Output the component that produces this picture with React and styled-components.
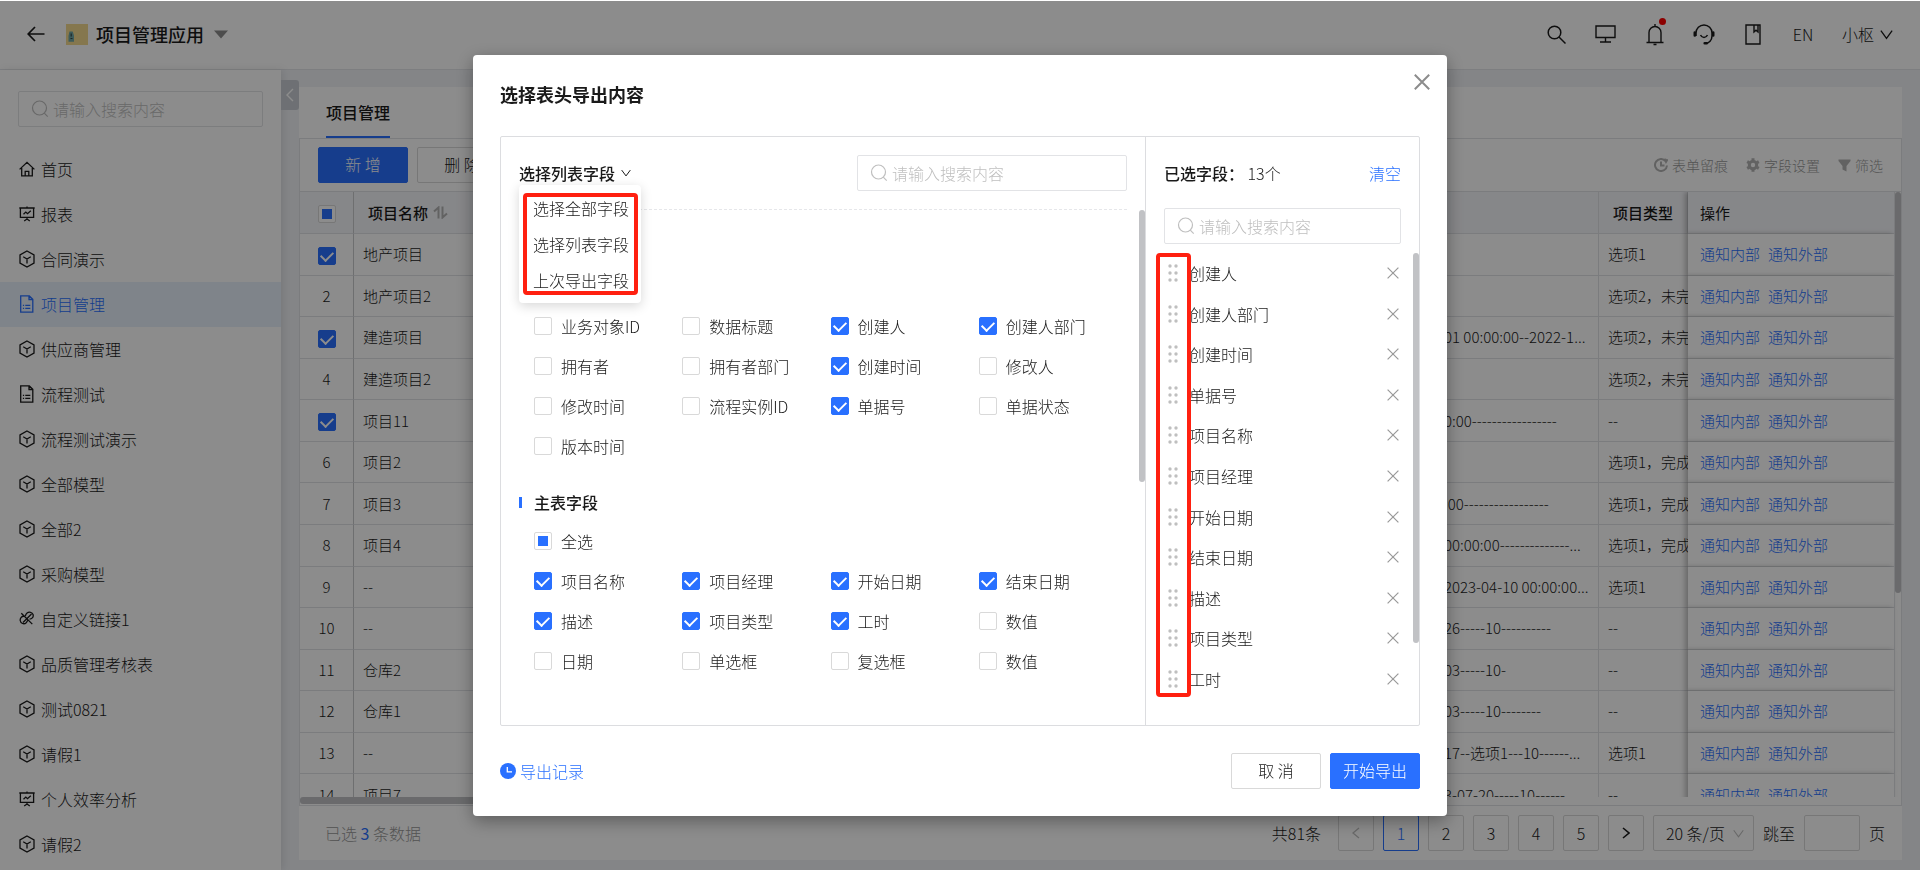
import React, { useEffect, useRef, useState } from 'react'
import styled, { createGlobalStyle } from 'styled-components';

const GlobalStyle = createGlobalStyle`
    * {
        box-sizing: border-box;
    }
    body {
        margin: 0;
        background-color: white;
        color: #1a1a1a;
        font-family: "Noto Sans CJK SC", "Noto Sans", sans-serif;
        font-size: 16px;
        font-weight: 300;
        line-height: 24px;
    }
    button, input, select {
        font: inherit;
        color: inherit;
    }
    button {
        border: none;
        background: none;
        padding: 0;
        cursor: pointer;
    }
    a {
        color: #2970ff;
        text-decoration: none;
    }
    svg {
        display: block;
        flex: none;
    }
`;

const Page = styled.div`
    height: 100vh;
    padding-top: 1px;
    display: flex;
    flex-direction: column;
    overflow: hidden;
`;

/* ---------- top bar ---------- */
const TopBar = styled.header`
    height: 69px;
    flex: none;
    display: flex;
    align-items: center;
    justify-content: space-between;
    padding: 0 27px 2px;
    border-bottom: 1px solid #e4e6ea;
`;
const Brand = styled.div`
    display: flex;
    align-items: center;
`;
const BackButton = styled.button`
    margin-right: 21px;
`;
const AppTitle = styled.h1`
    margin: 0 10px 0 8px;
    font-size: 18px;
    font-weight: 500;
`;
const Tools = styled.div`
    display: flex;
    align-items: center;
    gap: 27px;
`;
const ToolButton = styled.button`
    position: relative;
    width: ${({ $wide }) => ($wide ? "24px" : "22px")};
    display: flex;
    justify-content: center;
`;
const Dot = styled.span`
    position: absolute;
    top: -5px;
    right: 0;
    width: 7px;
    height: 7px;
    border-radius: 50%;
    background-color: #ff0000;
`;
const UserButton = styled.button`
    display: flex;
    align-items: center;
    gap: 6px;
`;

/* ---------- side menu ---------- */
const Body = styled.div`
    flex: 1;
    min-height: 0;
    display: flex;
    background-color: #f0f2f6;
`;
const SideBar = styled.nav`
    width: 281px;
    flex: none;
    padding-top: 21px;
    background-color: white;
    box-shadow: 2px 0 8px rgba(0, 0, 0, 0.1);
    overflow: hidden;
`;
const SideSearch = styled.div`
    padding: 0 18px 20px;
`;
const MenuItem = styled.a`
    height: 45px;
    padding: 0 0 2px 19px;
    display: flex;
    align-items: center;
    gap: 6px;
    color: ${({ $active }) => ($active ? "#2970ff" : "#1a1a1a")};
    background-color: ${({ $active }) => ($active ? "#e8f1fc" : "transparent")};
`;
const CollapseButton = styled.button`
    width: 18px;
    height: 30px;
    flex: none;
    margin-top: 10px;
    display: flex;
    align-items: center;
    justify-content: center;
    border-radius: 0 3px 3px 0;
    background-color: #c9cdd4;
`;

/* ---------- search box ---------- */
const SearchWrapper = styled.label`
    width: ${({ $width }) => $width || "100%"};
    height: 36px;
    padding: 0 12px 1px;
    display: flex;
    align-items: center;
    gap: 4px;
    border: 1px solid #e2e3e6;
    border-radius: 2px;
    background-color: white;
`;
const SearchInput = styled.input`
    flex: 1;
    min-width: 0;
    padding: 0;
    border: none;
    outline: none;
    background: none;
    &::placeholder {
        color: #bfbfbf;
        opacity: 1;
    }
`;

/* ---------- list page ---------- */
const Main = styled.main`
    flex: 1;
    min-width: 0;
    margin: 17px 18px 10px 0;
    display: flex;
    flex-direction: column;
    background-color: white;
`;
const Tabs = styled.div`
    height: 52px;
    flex: none;
    padding-left: 27px;
    display: flex;
    border-bottom: 1px solid #e0e2e6;
`;
const Tab = styled.button`
    font-weight: 500;
    border-bottom: 2px solid #2970ff;
`;
const Panel = styled.section`
    flex: 1;
    min-height: 0;
    display: flex;
    flex-direction: column;
    border: 1px solid #e0e2e6;
    border-top: none;
`;
const ToolRow = styled.div`
    height: 53px;
    flex: none;
    padding: 0 18px;
    display: flex;
    align-items: center;
    justify-content: space-between;
    border-bottom: 1px solid #e0e2e6;
`;
const ButtonGroup = styled.div`
    display: flex;
    gap: 9px;
`;
const Button = styled.button`
    width: 90px;
    height: 36px;
    padding-bottom: 2px;
    border-radius: 2px;
    border: 1px solid ${({ $primary }) => ($primary ? "#2970ff" : "#d9d9d9")};
    background-color: ${({ $primary }) => ($primary ? "#2970ff" : "white")};
    color: ${({ $primary }) => ($primary ? "white" : "#1a1a1a")};
`;
const Actions = styled.div`
    display: flex;
    gap: 18px;
`;
const Action = styled.button`
    display: flex;
    align-items: center;
    gap: 4px;
    font-size: 14px;
    color: #999;
    svg {
        color: #b3b3b3;
    }
`;
const TableArea = styled.div`
    flex: 1;
    min-height: 0;
    display: flex;
    overflow: hidden;
`;
const Table = styled.table`
    flex: 1;
    width: 100%;
    height: 624px;
    table-layout: fixed;
    border-collapse: separate;
    border-spacing: 0;
    font-size: 15px;
    line-height: 22px;
`;
const Th = styled.th`
    height: 42px;
    padding: 0 14px;
    text-align: left;
    font-weight: ${({ $light }) => ($light ? 400 : 500)};
    white-space: nowrap;
    background-color: #f5f6fa;
    border-bottom: 1px solid #e0e2e6;
    border-right: 1px solid #e0e2e6;
`;
const Td = styled.td`
    padding: 0 9px;
    white-space: nowrap;
    overflow: hidden;
    border-bottom: 1px solid #e0e2e6;
    border-right: ${({ $plain }) => ($plain ? "none" : "1px solid #e0e2e6")};
`;
const IndexTh = styled(Th)`
    padding: 0;
    text-align: center;
    border-right-color: #c8cacd;
`;
const IndexTd = styled(Td)`
    padding: 0;
    text-align: center;
    border-right-color: #c8cacd;
`;
const FixedTh = styled(Th)`
    padding: 0 12px;
    box-shadow: -3px 0 5px rgba(0, 0, 0, 0.25);
`;
const FixedTd = styled(Td)`
    padding: 0 12px;
    background-color: white;
    box-shadow: -3px 0 5px rgba(0, 0, 0, 0.25);
`;
const RowLink = styled.a`
    margin-right: 8px;
`;
const HeadLabel = styled.span`
    display: flex;
    align-items: center;
    gap: 5px;
`;
const ScrollTrack = styled.div`
    width: 6px;
    flex: none;
`;
const ScrollThumb = styled.div`
    height: ${({ $length }) => $length};
    border-radius: 3px;
    background-color: #c1c2c5;
`;
const BottomTrack = styled.div`
    height: 8px;
    flex: none;
`;
const BottomThumb = styled.div`
    width: 45%;
    height: 7px;
    border-radius: 3px;
    background-color: #c1c2c5;
`;
const TableFooter = styled.footer`
    height: 54px;
    flex: none;
    padding: 0 17px 0 26px;
    display: flex;
    align-items: center;
    justify-content: space-between;
`;
const Selected = styled.span`
    color: #999;
    strong {
        font-weight: 400;
        color: #2970ff;
    }
`;
const Pager = styled.div`
    display: flex;
    align-items: center;
    gap: 9px;
`;
const PageTotal = styled.span`
    margin-right: 8px;
`;
const PageButton = styled.button`
    width: 36px;
    height: 36px;
    display: flex;
    align-items: center;
    justify-content: center;
    border: 1px solid ${({ $active }) => ($active ? "#2970ff" : "#d9d9d9")};
    border-radius: 2px;
    color: ${({ $active }) => ($active ? "#2970ff" : "#1a1a1a")};
`;
const SizeBox = styled.label`
    height: 36px;
    padding: 0 9px 0 12px;
    display: flex;
    align-items: center;
    border: 1px solid #d9d9d9;
    border-radius: 2px;
`;
const SizeSelect = styled.select`
    width: 67px;
    padding: 0;
    appearance: none;
    border: none;
    outline: none;
    background: none;
`;
const JumpLabel = styled.label`
    display: flex;
    align-items: center;
    gap: 9px;
`;
const JumpInput = styled.input`
    width: 56px;
    height: 36px;
    border: 1px solid #d9d9d9;
    border-radius: 2px;
    background: none;
`;

/* ---------- check box ---------- */
const CheckInput = styled.input`
    appearance: none;
    width: 18px;
    height: 18px;
    flex: none;
    margin: 0;
    display: inline-flex;
    align-items: center;
    justify-content: center;
    vertical-align: middle;
    border: 1px solid #d9d9d9;
    border-radius: 2px;
    background-color: white;

    &:checked {
        border-color: #2970ff;
        background-color: #2970ff;
    }
    &:checked::after {
        content: "";
        width: 6px;
        height: 10px;
        margin-bottom: 3px;
        border: solid white;
        border-width: 0 2px 2px 0;
        transform: rotate(45deg);
    }
    &:indeterminate::after {
        content: "";
        width: 10px;
        height: 10px;
        background-color: #2970ff;
    }
`;

/* ---------- dialog ---------- */
const Mask = styled.div`
    position: fixed;
    inset: 1px 0 0;
    display: flex;
    align-items: center;
    justify-content: center;
    background-color: rgba(0, 0, 0, 0.45);
`;
const Dialog = styled.div`
    width: 974px;
    max-width: 96vw;
    border-radius: 4px;
    background-color: white;
    box-shadow: 0 5px 18px rgba(0, 0, 0, 0.35);
`;
const DialogHeader = styled.div`
    height: 81px;
    padding: 19px 17px 0 27px;
    display: flex;
    align-items: flex-start;
    justify-content: space-between;
`;
const DialogTitle = styled.h2`
    margin: 8px 0 0;
    font-size: 18px;
    font-weight: 700;
`;
const Panes = styled.div`
    height: 590px;
    margin: 0 27px;
    display: grid;
    grid-template-columns: 1fr 273px;
    border: 1px solid #dcdde0;
    border-radius: 2px;
`;
const FieldPane = styled.div`
    min-height: 0;
    display: flex;
    flex-direction: column;
    border-right: 1px solid #dcdde0;
`;
const FieldHeader = styled.div`
    margin: 0 18px;
    padding: 18px 0;
    display: flex;
    align-items: center;
    justify-content: space-between;
    border-bottom: 1px dashed #e6e7ea;
`;
const DropdownWrapper = styled.div`
    position: relative;
`;
const DropdownButton = styled.button`
    display: flex;
    align-items: center;
    gap: 6px;
    font-weight: 500;
`;
const DropdownMenu = styled.div`
    position: absolute;
    top: 100%;
    left: 0;
    z-index: 2;
    width: 122px;
    padding: 5px 0;
    border-radius: 4px;
    background-color: white;
    box-shadow: 0 3px 12px rgba(0, 0, 0, 0.16);
`;
const DropdownItem = styled.button`
    width: 100%;
    height: 36px;
    padding-left: 14px;
    display: flex;
    align-items: center;
`;
const Highlight = styled.span`
    position: absolute;
    inset: ${({ $inset }) => $inset};
    border: 4px solid #ff2010;
    border-radius: 4px;
    pointer-events: none;
`;
const FieldScroll = styled.div`
    flex: 1;
    min-height: 0;
    display: flex;
`;
const FieldBody = styled.div`
    flex: 1;
    padding: 72px 12px 0 18px;
`;
const FieldSection = styled.section`
    padding-top: 24px;
`;
const SectionTitle = styled.h3`
    margin: 0 0 7px;
    display: flex;
    align-items: center;
    gap: 12px;
    font-size: 16px;
    font-weight: 500;

    &::before {
        content: "";
        width: 3px;
        height: 11px;
        background-color: #2970ff;
    }
`;
const FieldGrid = styled.div`
    padding-left: 15px;
    display: grid;
    grid-template-columns: repeat(4, 1fr);
`;
const CheckLabel = styled.label`
    height: 40px;
    padding-left: ${({ $all }) => ($all ? "15px" : "0")};
    display: flex;
    align-items: center;
    gap: 9px;
`;
const SelectedPane = styled.div`
    min-width: 0;
    min-height: 0;
    padding-top: 18px;
`;
const SelectedHeader = styled.div`
    height: 36px;
    margin: 0 18px 17px;
    display: flex;
    align-items: center;
    justify-content: space-between;
`;
const SelectedCount = styled.span`
    strong {
        font-weight: 500;
    }
`;
const TextButton = styled.button`
    display: flex;
    align-items: center;
    gap: 4px;
    color: #2970ff;
`;
const SelectedSearch = styled.div`
    padding: 0 18px 9px;
`;
const SelectedScroll = styled.div`
    position: relative;
    height: 453px;
    display: flex;
`;
const SelectedList = styled.ul`
    flex: 1;
    height: 446px;
    margin: 0;
    padding: 0 14px 0 22px;
    display: grid;
    grid-auto-rows: 1fr;
    list-style: none;
`;
const SelectedItem = styled.li`
    display: flex;
    align-items: center;
    gap: 10px;
    span {
        flex: 1;
    }
`;
const DialogFooter = styled.div`
    padding: 27px;
    display: flex;
    align-items: center;
    justify-content: space-between;
`;

/* ---------- icons ---------- */
const Icon = ({ w = 16, h = w, box, sw = 1.3, children }) => (
    <svg width={w} height={h} viewBox={box || `0 0 ${w} ${h}`} fill="none" stroke="currentColor" strokeWidth={sw} aria-hidden="true">{children}</svg>
)

const SearchIcon = () => (
    <svg width="18" height="18" viewBox="0 0 18 18" fill="none" stroke="#bfbfbf" strokeWidth="1.2" aria-hidden="true">
        <circle cx="8.5" cy="8" r="7" />
        <path d="M13.3 13.2l3.4 3.4" />
    </svg>
)
const ChevronDown = ({ w = 10, color = "currentColor" }) => (
    <svg width={w} height={w - 2} viewBox="0 0 12 9" fill="none" stroke={color} strokeWidth="1.2" aria-hidden="true"><path d="M.8 1L6 8l5.200-7" /></svg>
)
const CrossIcon = ({ w = 12, sw = 1.2, color = "#999" }) => (
    <svg width={w} height={w} viewBox="0 0 12 12" fill="none" stroke={color} strokeWidth={sw} aria-hidden="true"><path d="M.6.6l10.800 10.800M11.400.6L.6 11.400" /></svg>
)
const HandleIcon = () => (
    <svg width="11" height="18" viewBox="0 0 11 18" fill="#bfbfbf" aria-hidden="true">
        {[2, 9, 16].map((y) => <React.Fragment key={y}><circle cx="2" cy={y} r="1.700" /><circle cx="8" cy={y} r="1.700" /></React.Fragment>)}
    </svg>
)

const menuIcons = {
    home: <Icon><path d="M.6 8.400L8 1.300l7.400 7.100M2.700 7v7.800h10.600V7M6.200 14.800v-4.500h3.600v4.500" /></Icon>,
    board: <Icon><path d="M.3 2h15.400M1.400 2v9.300h13.200V2M8 .5V2M8 11.300v2M5.200 15l2.800-2 2.800 2M4.500 8.300l2.300-2.200 1.700 1.600 3.300-3" /></Icon>,
    cube: <Icon h={18}><path d="M8 1l7 3.900v8.200L8 17l-7-3.900V4.900zM4.200 6.800L8 9l3.800-2.200M8 9v4.500" /></Icon>,
    file: <Icon h={18}><path d="M1.700.8h8.600l3.500 3.500v12.900H1.700zM10 .8v3.700h3.800M6.300 10.300h5M6.300 13.300h5M3.900 10.300h1.200M3.900 13.300h1.200" /></Icon>,
    link: <Icon><path d="M5.800 5.500C3 4.600.9 6.800 1.200 9.500c.4 3 3.800 4.300 6 2.200.8-.8 1-1.800 1.800-2.900M6.300 4.900C7.200 2.500 9.200.900 11.500 1.300c2.600.5 3.600 3.600 1.800 5.600-.8.900-1.800 1.200-2.800 1.300M2.300 2.300l11 10.800M12.500 3L4 11.500" /></Icon>,
}

const menu = [
    ["home", "首页"],
    ["board", "报表"],
    ["cube", "合同演示"],
    ["file", "项目管理"],
    ["cube", "供应商管理"],
    ["file", "流程测试"],
    ["cube", "流程测试演示"],
    ["cube", "全部模型"],
    ["cube", "全部2"],
    ["cube", "采购模型"],
    ["link", "自定义链接1"],
    ["cube", "品质管理考核表"],
    ["cube", "测试0821"],
    ["cube", "请假1"],
    ["board", "个人效率分析"],
    ["cube", "请假2"],
]

const rows = [
    { name: "地产项目", info: "", type: "选项1", checked: true },
    { name: "地产项目2", info: "", type: "选项2，未完" },
    { name: "建造项目", info: "01 00:00:00--2022-1...", type: "选项2，未完", checked: true },
    { name: "建造项目2", info: "", type: "选项2，未完" },
    { name: "项目11", info: "0:00-----------------", type: "--", checked: true },
    { name: "项目2", info: "", type: "选项1，完成" },
    { name: "项目3", info: ":00-----------------", type: "选项1，完成" },
    { name: "项目4", info: "00:00:00--------------...", type: "选项1，完成" },
    { name: "--", info: "2023-04-10 00:00:00...", type: "选项1" },
    { name: "--", info: "26-----10----------", type: "--" },
    { name: "仓库2", info: "03-----10-", type: "--" },
    { name: "仓库1", info: "03-----10--------", type: "--" },
    { name: "--", info: "17--选项1---10------...", type: "选项1" },
    { name: "项目7", info: "3-07-20-----10------", type: "--" },
]

const systemFields = ["业务对象ID", "数据标题", "创建人", "创建人部门", "拥有者", "拥有者部门", "创建时间", "修改人", "修改时间", "流程实例ID", "单据号", "单据状态", "版本时间"]
const mainFields = ["项目名称", "项目经理", "开始日期", "结束日期", "描述", "项目类型", "工时", "数值", "日期", "单选框", "复选框", "数值"]
const initialSelected = ["创建人", "创建人部门", "创建时间", "单据号", "项目名称", "项目经理", "开始日期", "结束日期", "描述", "项目类型", "工时"]

const SomeChecked = (props) => {
    const ref = useRef(null)
    useEffect(() => { ref.current.indeterminate = true }, [])
    return <CheckInput type="checkbox" ref={ref} {...props} />
}

const SearchBox = ({ width, label }) => (
    <SearchWrapper $width={width}>
        <SearchIcon />
        <SearchInput type="text" placeholder="请输入搜索内容" aria-label={label} />
    </SearchWrapper>
)

const Section = ({ title, fields, selected, onToggle }) => (
    <FieldSection>
        {title && (
            <>
                <SectionTitle>{title}</SectionTitle>
                <CheckLabel $all><SomeChecked />全选</CheckLabel>
            </>
        )}
        <FieldGrid>
            {fields.map((field, i) => (
                <CheckLabel key={i}>
                    <CheckInput type="checkbox" checked={selected.includes(field)} onChange={() => onToggle(field)} />
                    {field}
                </CheckLabel>
            ))}
        </FieldGrid>
    </FieldSection>
)

const Header = () => (
    <TopBar>
        <Brand>
            <BackButton aria-label="返回"><Icon w={18} sw={1.700}><path d="M17.500 9H1.500M8 2L1.200 9 8 16" /></Icon></BackButton>
            <svg width="22" height="21" viewBox="0 0 22 21" aria-hidden="true">
                <rect width="22" height="21" fill="#f3d98f" />
                <path d="M3.500 7.500h3.200l1.300 4v6.200H2.500v-6z" fill="#6fa6a4" />
                <path d="M5.200 9.500v3M4.500 14.500h2" stroke="#33484a" strokeWidth="1.200" />
            </svg>
            <AppTitle>项目管理应用</AppTitle>
            <svg width="14" height="9" viewBox="0 0 14 9" fill="#8c8c8c" aria-hidden="true"><path d="M0 .5h14L7 8.500z" /></svg>
        </Brand>
        <Tools>
            <ToolButton aria-label="搜索"><Icon w={19} sw={1.500}><circle cx="7.500" cy="7.500" r="6.300" /><path d="M12 12l6.500 6.500" /></Icon></ToolButton>
            <ToolButton aria-label="桌面"><Icon w={21} h={18} sw={1.400}><path d="M1 1h19v11.500H1zM10.500 12.500V17M5 17h11" /></Icon></ToolButton>
            <ToolButton aria-label="消息">
                <Icon w={18} h={23} sw={1.400}><path d="M3 19.200V9.500a6 6 0 0112 0v9.700M.5 19.500h17M9 1v2M7.500 21.500h3" /></Icon>
                <Dot />
            </ToolButton>
            <ToolButton aria-label="客服"><Icon w={22} sw={1.500}><path d="M3 13V10a8 8 0 0116 0v3c0 4-3 7.300-6.500 7.300M7.500 12c1.500 3.200 5.500 3.200 7 0" /><path d="M1.800 9.500v3M20.200 9.500v3M11.700 20.300h2" strokeWidth="2.600" strokeLinecap="round" /></Icon></ToolButton>
            <ToolButton aria-label="手册"><Icon w={16} h={21} sw={1.400}><path d="M1 1h14v19H1zM9 1v7l2-1.800L13 8V1" /></Icon></ToolButton>
            <ToolButton $wide>EN</ToolButton>
            <UserButton>小枢<ChevronDown w={13} /></UserButton>
        </Tools>
    </TopBar>
)

const ListTable = () => (
    <Table>
        <colgroup>
            <col style={{ width: 54 }} />
            <col />
            <col style={{ width: 164 }} />
            <col style={{ width: 89 }} />
            <col style={{ width: 207 }} />
        </colgroup>
        <thead>
            <tr>
                <IndexTh><SomeChecked aria-label="全选数据" /></IndexTh>
                <Th>
                    <HeadLabel>项目名称
                        <svg width="15" height="13" viewBox="0 0 15 13" fill="none" stroke="#b3b3b3" strokeWidth="2" aria-hidden="true"><path d="M5.500 12.500V1.500L1 5.500M9.500.5v11L14 7.500" /></svg>
                    </HeadLabel>
                </Th>
                <Th />
                <Th>项目类型</Th>
                <FixedTh $light>操作</FixedTh>
            </tr>
        </thead>
        <tbody>
            {rows.map((row, i) => (
                <tr key={i}>
                    <IndexTd>{row.checked ? <CheckInput type="checkbox" defaultChecked aria-label={row.name} /> : i + 1}</IndexTd>
                    <Td>{row.name}</Td>
                    <Td>{row.info}</Td>
                    <Td $plain>{row.type}</Td>
                    <FixedTd><RowLink href="#in">通知内部</RowLink><RowLink href="#out">通知外部</RowLink></FixedTd>
                </tr>
            ))}
        </tbody>
    </Table>
)

const ExportDialog = () => {
    const [selected, setSelected] = useState(initialSelected)

    const toggle = (field) => {
        setSelected(selected.includes(field) ? selected.filter((f) => f !== field) : [...selected, field])
    }

    return (
        <Mask>
            <Dialog role="dialog" aria-labelledby="export-title">
                <DialogHeader>
                    <DialogTitle id="export-title">选择表头导出内容</DialogTitle>
                    <button aria-label="关闭"><CrossIcon w={16} sw={1.500} color="#8c8c8c" /></button>
                </DialogHeader>
                <Panes>
                    <FieldPane>
                        <FieldHeader>
                            <DropdownWrapper>
                                <DropdownButton>选择列表字段<ChevronDown w={10} /></DropdownButton>
                                <DropdownMenu>
                                    <DropdownItem>选择全部字段</DropdownItem>
                                    <DropdownItem>选择列表字段</DropdownItem>
                                    <DropdownItem>上次导出字段</DropdownItem>
                                    <Highlight $inset="8px 3px 8px 4px" />
                                </DropdownMenu>
                            </DropdownWrapper>
                            <SearchBox width="270px" label="搜索字段" />
                        </FieldHeader>
                        <FieldScroll>
                            <FieldBody>
                                <Section fields={systemFields} selected={selected} onToggle={toggle} />
                                <Section title="主表字段" fields={mainFields} selected={selected} onToggle={toggle} />
                            </FieldBody>
                            <ScrollTrack><ScrollThumb $length="272px" /></ScrollTrack>
                        </FieldScroll>
                    </FieldPane>
                    <SelectedPane>
                        <SelectedHeader>
                            <SelectedCount><strong>已选字段：</strong> 13个</SelectedCount>
                            <TextButton onClick={() => setSelected([])}>清空</TextButton>
                        </SelectedHeader>
                        <SelectedSearch><SearchBox label="搜索已选字段" /></SelectedSearch>
                        <SelectedScroll>
                            <SelectedList>
                                {selected.map((field) => (
                                    <SelectedItem key={field}>
                                        <HandleIcon />
                                        <span>{field}</span>
                                        <button aria-label={`移除${field}`} onClick={() => toggle(field)}><CrossIcon /></button>
                                    </SelectedItem>
                                ))}
                            </SelectedList>
                            <ScrollTrack><ScrollThumb $length="390px" /></ScrollTrack>
                            <Highlight $inset="0 228px 9px 10px" />
                        </SelectedScroll>
                    </SelectedPane>
                </Panes>
                <DialogFooter>
                    <TextButton>
                        <svg width="16" height="16" viewBox="0 0 16 16" aria-hidden="true"><circle cx="8" cy="8" r="8" fill="#2970ff" /><path d="M7.300 4v4.800H12" fill="none" stroke="white" strokeWidth="1.300" /></svg>
                        导出记录
                    </TextButton>
                    <ButtonGroup>
                        <Button>取 消</Button>
                        <Button $primary>开始导出</Button>
                    </ButtonGroup>
                </DialogFooter>
            </Dialog>
        </Mask>
    )
}

const App = () => {
    return (
        <Page>
            <GlobalStyle />
            <Header />
            <Body>
                <SideBar>
                    <SideSearch><SearchBox label="搜索菜单" /></SideSearch>
                    {menu.map(([icon, text], i) => (
                        <MenuItem key={text} href={`#menu-${i}`} $active={text === "项目管理"}>{menuIcons[icon]}{text}</MenuItem>
                    ))}
                </SideBar>
                <CollapseButton aria-label="收起菜单"><Icon w={8} h={14} sw={1.400}><path d="M7 1L1 7l6 6" stroke="white" /></Icon></CollapseButton>
                <Main>
                    <Tabs><Tab>项目管理</Tab></Tabs>
                    <Panel>
                        <ToolRow>
                            <ButtonGroup>
                                <Button $primary>新 增</Button>
                                <Button>删 除</Button>
                            </ButtonGroup>
                            <Actions>
                                <Action><Icon w={14} sw={2}><path d="M11.500 3A6 6 0 1013 7.500M7 3.500v4h3.500M10.500.800l1.500 3 1.500-2.500" /></Icon>表单留痕</Action>
                                <Action>
                                    <Icon w={14} sw={3}><circle cx="7" cy="7" r="3.700" /><path d="M7 .3v2M7 11.700v2M1.200 3.600l1.800 1M11 9.400l1.800 1M1.200 10.400l1.800-1M11 4.600l1.800-1" strokeWidth="3" /></Icon>字段设置
                                </Action>
                                <Action><svg width="13" height="13" viewBox="0 0 13 13" fill="currentColor" aria-hidden="true"><path d="M.5.500h12v1.500L8.500 7v5.500l-4-2V7L.5 2z" /></svg>筛选</Action>
                            </Actions>
                        </ToolRow>
                        <TableArea>
                            <ListTable />
                            <ScrollTrack><ScrollThumb $length="401px" /></ScrollTrack>
                        </TableArea>
                        <BottomTrack><BottomThumb /></BottomTrack>
                    </Panel>
                    <TableFooter>
                        <Selected>已选 <strong>3</strong> 条数据</Selected>
                        <Pager>
                            <PageTotal>共81条</PageTotal>
                            <PageButton disabled aria-label="上一页"><Icon w={8} h={12}><path d="M7 1L1 6l6 5" stroke="#bfbfbf" /></Icon></PageButton>
                            {[1, 2, 3, 4, 5].map((n) => <PageButton key={n} $active={n === 1}>{n}</PageButton>)}
                            <PageButton aria-label="下一页"><Icon w={8} h={12} sw={1.600}><path d="M1 1l6 5-6 5" /></Icon></PageButton>
                            <SizeBox>
                                <SizeSelect aria-label="每页条数" defaultValue="20"><option value="20">20 条/页</option></SizeSelect>
                                <ChevronDown w={11} color="#bfbfbf" />
                            </SizeBox>
                            <JumpLabel>跳至<JumpInput type="text" />页</JumpLabel>
                        </Pager>
                    </TableFooter>
                </Main>
            </Body>
            <ExportDialog />
        </Page>
    )
}

export default App
